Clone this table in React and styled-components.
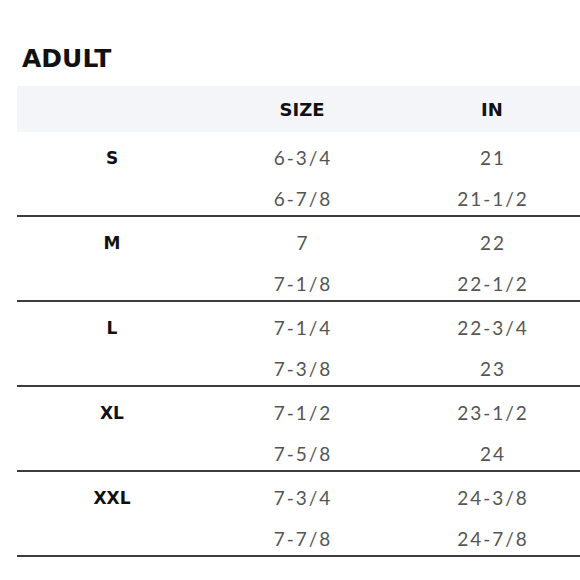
import React from 'react'
import styled, { createGlobalStyle } from 'styled-components'

const sizes = [
  { label: 'S', rows: [['6-3/4', '21'], ['6-7/8', '21-1/2']] },
  { label: 'M', rows: [['7', '22'], ['7-1/8', '22-1/2']] },
  { label: 'L', rows: [['7-1/4', '22-3/4'], ['7-3/8', '23']] },
  { label: 'XL', rows: [['7-1/2', '23-1/2'], ['7-5/8', '24']] },
  { label: 'XXL', rows: [['7-3/4', '24-3/8'], ['7-7/8', '24-7/8']] },
]

const App = () => {
  return (
    <>
      <GlobalStyle />
      <Page>
        <Title>ADULT</Title>
        <Table>
          <HeadRow>
            <HeadCell />
            <HeadCell>SIZE</HeadCell>
            <HeadCell>IN</HeadCell>
          </HeadRow>
          { sizes.map(group => (
            <Group key={ group.label }>
              { group.rows.map((row, i) => (
                <Row key={ i }>
                  <Label>{ i === 0 ? group.label : '' }</Label>
                  <Value>{ row[0] }</Value>
                  <Value>{ row[1] }</Value>
                </Row>
              )) }
            </Group>
          )) }
        </Table>
      </Page>
    </>
  )
}

export default App

const GlobalStyle = createGlobalStyle`
  html, body {
    margin: 0;
    padding: 0;
    background: #fff;
    overflow: hidden;
  }
  body {
    width: 580px;
    height: 580px;
  }
`

const Page = styled.div`
  width: 580px;
  height: 580px;
  padding: 45px 0 0 17px;
  box-sizing: border-box;
  overflow: hidden;
  font-family: 'DejaVu Sans', Verdana, sans-serif;
`

const Title = styled.h1`
  margin: 0 0 14px 5px;
  font-size: 25px;
  line-height: 27px;
  font-weight: 700;
  color: #111;
`

const Table = styled.div`
  width: 570px;
`

const HeadRow = styled.div`
  display: grid;
  grid-template-columns: repeat(3, 190px);
  height: 46px;
  align-items: center;
  background: #f4f5f9;
`

const HeadCell = styled.div`
  text-align: center;
  font-size: 18px;
  font-weight: 700;
  color: #111;
`

const Group = styled.div`
  border-bottom: 2px solid #3c3c3c;
`

const Row = styled.div`
  display: grid;
  grid-template-columns: repeat(3, 190px);
  height: 41.5px;
  padding-top: 9.5px;
  box-sizing: border-box;
  line-height: 32px;
`

const Label = styled.div`
  text-align: center;
  font-size: 17px;
  font-weight: 700;
  color: #111;
`

const Value = styled.div`
  text-align: center;
  font-family: Lato, 'Open Sans', sans-serif;
  font-size: 19px;
  letter-spacing: 2px;
  text-indent: 2px;
  color: #555;
`
